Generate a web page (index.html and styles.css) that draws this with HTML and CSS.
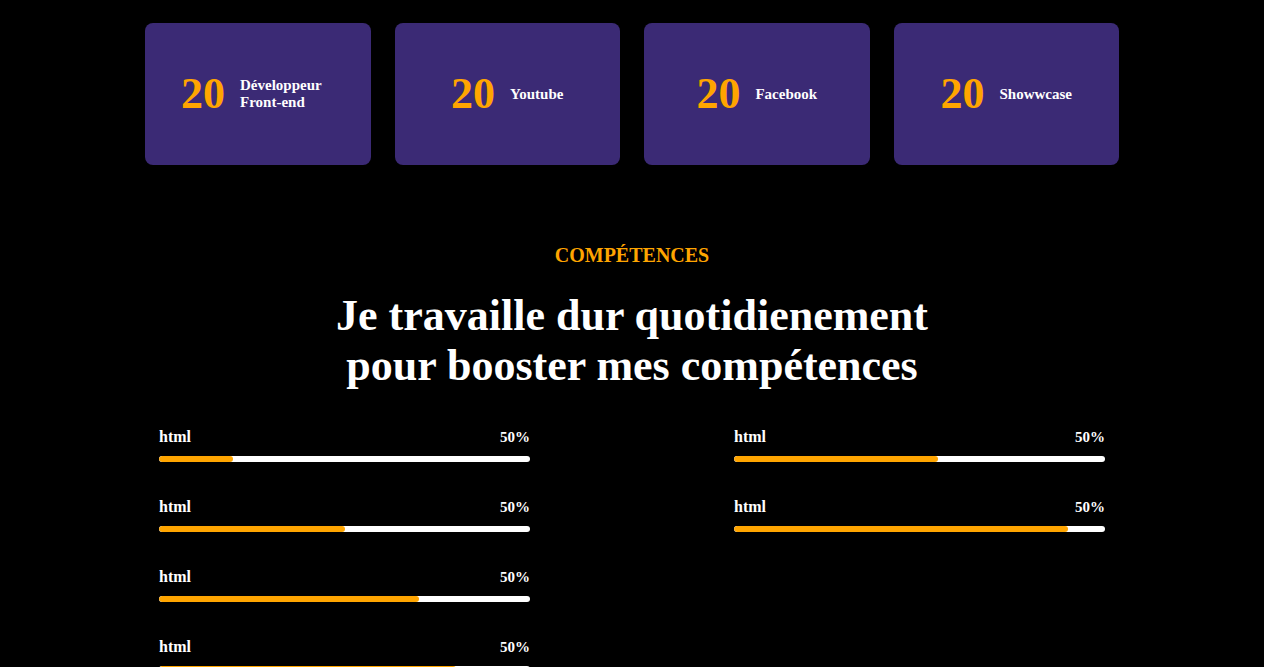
FILE: index.html
```html
<!DOCTYPE html>
<html lang="fr">
<head>
<meta charset="utf-8">
<title>Compétences</title>
<link rel="stylesheet" href="styles.css">
</head>
<body>
<section class="stats">
  <div class="card"><span class="num">20</span><span class="label">Développeur Front-end</span></div>
  <div class="card"><span class="num">20</span><span class="label">Youtube</span></div>
  <div class="card"><span class="num">20</span><span class="label">Facebook</span></div>
  <div class="card"><span class="num">20</span><span class="label">Showwcase</span></div>
</section>
<section class="skills">
  <p class="kicker">COMPÉTENCES</p>
  <h2 class="title">Je travaille dur quotidienement pour booster mes compétences</h2>
  <div class="grid">
    <div class="col">
      <div class="skill"><div class="head"><span class="name">html</span><span class="pct">50%</span></div><div class="bar"><div class="fill" style="width:20%"></div></div></div>
      <div class="skill"><div class="head"><span class="name">html</span><span class="pct">50%</span></div><div class="bar"><div class="fill" style="width:50%"></div></div></div>
      <div class="skill"><div class="head"><span class="name">html</span><span class="pct">50%</span></div><div class="bar"><div class="fill" style="width:70%"></div></div></div>
      <div class="skill"><div class="head"><span class="name">html</span><span class="pct">50%</span></div><div class="bar"><div class="fill" style="width:80%"></div></div></div>
    </div>
    <div class="col">
      <div class="skill"><div class="head"><span class="name">html</span><span class="pct">50%</span></div><div class="bar"><div class="fill" style="width:55%"></div></div></div>
      <div class="skill"><div class="head"><span class="name">html</span><span class="pct">50%</span></div><div class="bar"><div class="fill" style="width:90%"></div></div></div>
    </div>
  </div>
</section>
</body>
</html>
```
FILE: styles.css
```css
html, body {
  margin: 0;
  padding: 0;
  background: #000;
  color: #fff;
  font-family: "Liberation Serif", "Times New Roman", serif;
  font-weight: bold;
}

.stats {
  width: 974px;
  margin: 0 auto;
  padding-top: 23px;
  display: grid;
  grid-template-columns: repeat(4, 1fr);
  gap: 24px;
}

.card {
  height: 142px;
  box-sizing: border-box;
  background: #3b2a75;
  border-radius: 8px;
  padding: 0 36px;
  display: flex;
  align-items: center;
  justify-content: center;
  gap: 15px;
}

.num {
  color: #ffa500;
  font-size: 44px;
  line-height: 1;
  flex: none;
}

.label {
  font-size: 15px;
  line-height: 17px;
  color: #fff;
}

.skills {
  width: 946px;
  margin: 0 auto;
  padding-top: 79px;
  text-align: center;
}

.kicker {
  margin: 0;
  color: #ffa500;
  font-size: 20px;
  line-height: 22px;
}

.title {
  margin: 25px auto 0;
  max-width: 620px;
  font-size: 44px;
  line-height: 50px;
}

.grid {
  margin-top: 37px;
  display: grid;
  grid-template-columns: 371px 371px;
  justify-content: space-between;
  text-align: left;
}

.skill {
  margin-bottom: 36px;
}

.head {
  display: flex;
  justify-content: space-between;
  align-items: baseline;
  height: 17px;
  line-height: 17px;
  margin-bottom: 11px;
}

.name {
  font-size: 16px;
}

.pct {
  font-size: 15px;
}

.bar {
  height: 6px;
  background: #fff;
  border-radius: 3px;
  overflow: hidden;
}

.fill {
  height: 100%;
  background: #ffa500;
  border-radius: 3px;
}
```
